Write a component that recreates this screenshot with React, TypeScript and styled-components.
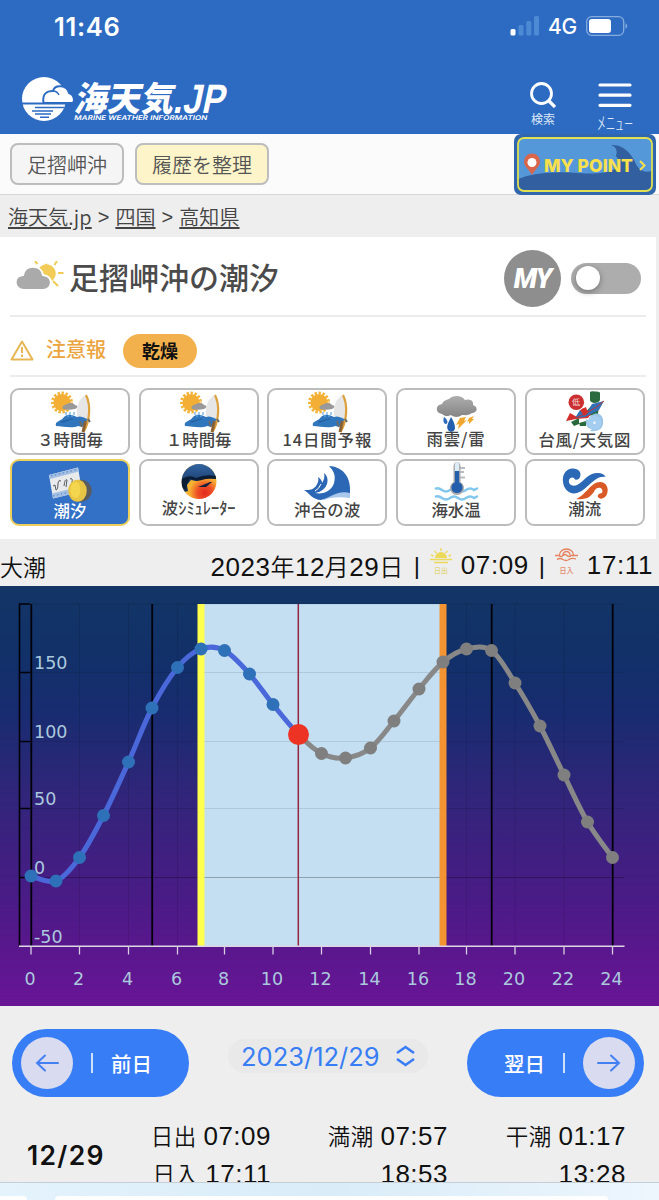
import React from 'react';
import styled, {createGlobalStyle} from 'styled-components';

const JP = `'Liberation Sans', 'Noto Sans CJK JP', sans-serif`;
const CJK = `'Noto Sans CJK JP', sans-serif`;

const GlobalStyle = createGlobalStyle`
  body {
    margin: 0;
    background: #eee;
    font-family: ${JP};
    color: #111;
  }
  svg {
    display: block;
    flex: none;
  }
`;

// 潮位グラフのデータ（[x, y] は描画座標）
const tidePoints: [number, number][] = [
  [31, 290], [56, 295], [79.5, 271.5], [103.5, 229.5], [128.5, 176], [152, 122],
  [177.5, 81.5], [201, 63], [224.5, 64.5], [249.5, 88], [273, 118.5], [298.5, 148.5],
  [321.5, 167.5], [345.5, 172], [370.5, 162], [394, 135], [419, 103], [443, 76],
  [466.5, 63], [491.5, 64.5], [515, 97], [540, 140], [564, 189], [587.5, 236], [612.5, 271.5],
];
const NOW = 11;

const smoothPath = (from: number, to: number) => {
  const p = tidePoints;
  let d = `M${p[from][0]} ${p[from][1]}`;
  for (let i = from; i < to; i++) {
    const a = p[Math.max(i - 1, 0)];
    const b = p[i];
    const c = p[i + 1];
    const e = p[Math.min(i + 2, p.length - 1)];
    d += ` C${b[0] + (c[0] - a[0]) / 6} ${b[1] + (c[1] - a[1]) / 6}`;
    d += ` ${c[0] - (e[0] - b[0]) / 6} ${c[1] - (e[1] - b[1]) / 6} ${c[0]} ${c[1]}`;
  }
  return d;
};

const ChartText = styled.text`
  fill: #abc9dd;
  font-family: 'DejaVu Sans', sans-serif;
  font-size: 17.5px;
`;

const TideChart: React.FC = () => (
  <svg width="659" height="420" viewBox="0 0 659 420">
    <defs>
      <linearGradient id="sea" x1="0" y1="0" x2="0" y2="1">
        <stop offset="0" stopColor="#133566" />
        <stop offset="0.15" stopColor="#113168" />
        <stop offset="0.3" stopColor="#182c70" />
        <stop offset="0.5" stopColor="#31257a" />
        <stop offset="0.75" stopColor="#4a1b86" />
        <stop offset="0.86" stopColor="#59178d" />
        <stop offset="1" stopColor="#681596" />
      </linearGradient>
    </defs>
    <rect width="659" height="420" fill="url(#sea)" />
    <rect x="201" y="18" width="242" height="342" fill="#c4dff2" />
    <g stroke="#000" strokeOpacity="0.1" strokeWidth="1">
      {[18, 86.5, 155.5, 222.5].map((y) => <path key={y} d={`M19 ${y}H624`} />)}
      {[79.5, 128.5, 177.5, 466.5, 515, 564].map((x) => <path key={x} d={`M${x} 18V360`} />)}
    </g>
    <path d="M19 291.5H624" stroke="#000" strokeOpacity="0.28" />
    <rect x="197.5" y="18" width="7" height="342" fill="#ffff50" />
    <rect x="439.5" y="18" width="7" height="342" fill="#f39332" />
    <path
      d="M30 18H19.5V360M19.5 86.5H30M19.5 155.5H30M19.5 222.5H30M19.5 291.5H30"
      fill="none" stroke="#020208" strokeWidth="1.6" />
    <path d="M31.3 18V360M152.2 18V360M491.7 18V360M612.7 18V360" stroke="#020208" strokeWidth="1.8" />
    <path d="M298.3 18V360" stroke="#962743" strokeWidth="1.5" />
    <path d="M19 360.3H624.5" stroke="#ddd6e4" strokeWidth="1.5" />
    {Array.from({length: 13}, (_, i) => {
      const x = tidePoints[i * 2][0];
      return (
        <g key={i}>
          <path d={`M${x} 360V368.5`} stroke="#d8cfe2" strokeWidth="1.3" />
          <ChartText x={x - 1} y="399" textAnchor="middle">{i * 2}</ChartText>
        </g>
      );
    })}
    {[[150, 83], [100, 152], [50, 219], [0, 288], [-50, 357]].map(([label, y]) => (
      <ChartText key={label} x="34" y={y}>{label}</ChartText>
    ))}
    <path d={smoothPath(0, NOW)} fill="none" stroke="#4a68da" strokeWidth="5" />
    <path d={smoothPath(NOW, 24)} fill="none" stroke="#888" strokeWidth="5" />
    {tidePoints.map(([x, y], i) => (
      <circle
        key={i} cx={x} cy={y} r={i === NOW ? 10.5 : 6.5}
        fill={i === NOW ? '#ed3323' : i < NOW ? '#2f71b8' : '#7f7f7f'} />
    ))}
  </svg>
);

const SurfIcon = () => (
  <g>
    <circle cx="52" cy="14.5" r="9.5" fill="none" stroke="#f2b43a" strokeWidth="3" strokeDasharray="2.4 1.6" />
    <circle cx="52" cy="14.5" r="8.6" fill="#f3ae35" />
    <path d="M76 7C69 10 66 18 67 28L77 34C81 24 79 14 76 7Z" fill="#e6e6e6" />
    <path d="M46 38C44 33 52 33 54 29C58 25 63 27 67 29C72 27 75 31 79 31L74 35C76 38 71 39 68 38C61 41 53 38 46 38Z" fill="#2f76bd" />
    <path d="M51 34C56 34 58 31 63 31" fill="none" stroke="#1f5d9f" strokeWidth="1.2" />
    <path d="M76 7C81 17 80 33 73.5 44" fill="none" stroke="#dca13c" strokeWidth="2.2" />
    <path d="M75.5 33L73 44" stroke="#8a6132" strokeWidth="3" />
    <path d="M70 33L72 39M78 31L80 34" stroke="#6c6a66" strokeWidth="2" />
    <path d="M53 21C51 17 56 17 57 16C60 14 64 15 65 17C68 17 68 20 65 21C61 22 56 22 53 21Z" fill="#999" />
    <path d="M56 24V27M60 24V27M64 24V27M58 27V29M62 27V29" stroke="#64a8df" strokeWidth="1.2" />
  </g>
);

const ThunderIcon = () => (
  <g>
    <defs>
      <linearGradient id="cloud" x1="0" y1="0" x2="0" y2="1">
        <stop offset="0" stopColor="#adadad" />
        <stop offset="1" stopColor="#858585" />
      </linearGradient>
    </defs>
    <path d="M46 26C39 25 39 17 46 16C48 11 53 12 54 10C58 7 66 7 69 12C75 10 78 14 77 17C83 19 81 25 76 25C72 28 69 27 66 27C62 30 57 29 55 27C52 29 48 28 46 26Z" fill="url(#cloud)" />
    <path d="M48 29C47 31 47 36 50 36C53 35 51 31 48 29Z" fill="#2d6dbb" />
    <path d="M55 29C52 35 50 39 52 42C54 45 59 44 59 40C59 36 57 32 55 29Z" fill="#225fae" />
    <path d="M64 30L70 29L68 33L71 32L62 41L63 36L60 37ZM73 30L78 28L76 31L78 31L73 36L73 33L71 34Z" fill="#f1a72f" />
  </g>
);

const TyphoonIcon = () => (
  <g>
    <path d="M65 4Q66 3 70 3.5Q75 3 75 5V12Q74 15 69 15Q65 14 65 12Z" fill="#2c6a3f" />
    <path d="M67 17L74 17L73 26L63 28L58 27ZM46 34L54 30L54 36L49 38ZM54 35L61 33L61 38L55 38Z" fill="#28683d" />
    <path d="M41 33L45 25L52 29L58 20L65 24L73 17L63 30L51 31Z" fill="#d62d2b" />
    <path d="M50 30L55 22L61 27L67 16L79 13L74 22L66 26L60 29Z" fill="#3270b8" />
    <path d="M55 22L61 19L63 25L59 28Z" fill="#d62d2b" />
    <path d="M42 32Q62 28 79 13" fill="none" stroke="#c43534" strokeWidth="1" />
    <circle cx="51.3" cy="14.3" r="7.8" fill="#cb2f30" />
    <text x="47" y="17" fontSize="8" fill="#f6dada" fontFamily="Noto Sans CJK JP">低</text>
    <path d="M69 26C76 24 79 30 78 36C77 41 73 44 65 43L67 41C62 41 60 36 61 31L64 33C64 29 66 27 69 26Z" fill="#9bc5e8" />
    <circle cx="69.5" cy="34.7" r="7" fill="#a5cdef" />
    <circle cx="69.5" cy="34.7" r="1.3" fill="#eef7ff" />
  </g>
);

const TideIcon = () => (
  <g>
    <path d="M39 16L68 8.5L72 32L43 39.5Z" fill="#e9eaec" />
    <path d="M39 16L68 8.5L69 12.5L40 20ZM42 34.5L60 30V35.5L43 39.5Z" fill="#a4bfe4" />
    <path d="M41 17L67 10.5M43 37L60 33" stroke="#4d7ec1" strokeDasharray="1.5 2.5" />
    <path d="M43 27L45 26L46 31Q48 31 48 24Q49 20 51 22M54 27Q55 19 57 21L56 28M60 20Q63 18 62 24L60 27L65 23" fill="none" stroke="#555b62" />
    <circle cx="70.7" cy="31.7" r="11" fill="#595b5e" />
    <ellipse cx="67.5" cy="31.7" rx="9.3" ry="11" fill="#e8c544" />
    <ellipse cx="65.5" cy="31" rx="5" ry="8" fill="#f4d64e" />
  </g>
);

const SimulatorIcon = () => (
  <g>
    <defs>
      <clipPath id="ball"><circle cx="60" cy="22.6" r="17.5" /></clipPath>
      <radialGradient id="heat" cx="0.66" cy="0.8" r="0.6">
        <stop offset="0" stopColor="#e3281d" />
        <stop offset="0.35" stopColor="#ee4f26" />
        <stop offset="0.7" stopColor="#f7ae31" />
        <stop offset="1" stopColor="#f8c034" />
      </radialGradient>
      <linearGradient id="deep" x1="0" y1="0" x2="0" y2="1">
        <stop offset="0" stopColor="#3265a3" />
        <stop offset="1" stopColor="#10294f" />
      </linearGradient>
    </defs>
    <g clipPath="url(#ball)">
      <rect x="42" y="5" width="36" height="36" fill="url(#heat)" />
      <path d="M42 5H78V18Q70 17 66 19L58 22L52 21L48 26L49 32L42 34Z" fill="url(#deep)" />
      <path d="M43 20Q50 15 57 19Q66 15 77 17V20Q68 19 63 21Q57 23 51 20L48 25L47 31L43 28Z" fill="#0b1c35" />
      <path d="M59 28L64 26L71 23L73 23L67 28Z" fill="#10223d" />
    </g>
  </g>
);

const WaveIcon = () => (
  <g>
    <path d="M52 38Q65 33 83 32L83 39Q66 37 57 41Z" fill="#a9c7ec" />
    <path
      d="M62 7C78 8 84 20 83 34C70 31 63 39 54 41C46 41 42 34 37 31C43 31 46 31 49 27C51 24 52 21 51 18C54 20 55 22 55 24C57 21 58 18 57 14C61 17 61 22 60 25C58 30 54 33 48 34C57 36 65 31 67 24C69 17 67 12 62 7Z"
      fill="#2b67b4" />
    <path d="M48 32Q52 30 54 25" fill="none" stroke="#fff" />
  </g>
);

const TemperatureIcon = () => (
  <g>
    <path d="M39 30Q42 28 46 31T54 31T62 31T70 31T78 31L82 29M39 38Q42 36 46 39T54 39T62 39T70 39T78 39L82 37" fill="none" stroke="#81c7ee" strokeWidth="2.4" />
    <path d="M64 9H69M64 13H68M64 18.5H69" stroke="#b9bbc0" strokeWidth="2.2" />
    <path d="M57.5 23V7Q58 3 61 3T64.5 7V23A7 7 0 1 1 57.5 23Z" fill="#aaa" />
    <circle cx="61" cy="28.5" r="5.6" fill="#245fad" />
    <path d="M61 5V13" stroke="#dcecf8" strokeWidth="4.2" strokeLinecap="round" />
    <path d="M61 12V27" stroke="#245fad" strokeWidth="4.2" />
  </g>
);

const CurrentIcon = () => (
  <g>
    <path
      d="M55 18C57 13 53 9 47 9.5C40 10 37 17 38 23C39 31 45 36 52 34C63 31 69 16 80.5 18C79 14 72 13 67 15C60 18 57 24 52 26C47 28 43 25 44 21C45 18 48 18 49 19C50 22 54 21 55 18Z"
      fill="#2b68b5" />
    <path
      d="M51 40C61 36 66 23 75 23C82 23 84 30 82 35C81 38 77 41 74 39C71 37 74 34 77 34C79 29 73 27 70 31C66 38 62 41 51 40Z"
      fill="#d95a27" />
  </g>
);

const menuItems = [
  {label: '３時間毎', icon: <SurfIcon />},
  {label: '１時間毎', icon: <SurfIcon />},
  {label: '14日間予報', icon: <SurfIcon />, spacing: 0.9},
  {label: '雨雲/雷', icon: <ThunderIcon />, spacing: 0.9, lift: 1},
  {label: '台風/天気図', icon: <TyphoonIcon />, spacing: 0.7},
  {label: '潮汐', icon: <TideIcon />, active: true},
  {label: '波ｼﾐｭﾚｰﾀｰ', icon: <SimulatorIcon />, lift: 3},
  {label: '沖合の波', icon: <WaveIcon />, spacing: 0.3, lift: 1},
  {label: '海水温', icon: <TemperatureIcon />, lift: 1},
  {label: '潮流', icon: <CurrentIcon />, lift: 2},
];

const Logo = () => (
  <svg width="212" height="48" viewBox="0 0 212 48" overflow="visible">
    <defs>
      <clipPath id="sun"><circle cx="22" cy="22" r="22" /></clipPath>
    </defs>
    <g clipPath="url(#sun)">
      <rect width="44" height="44" fill="#fff" />
      <path d="M13 30.5H44M10 34H31M13 37H29M18 40.2H27" stroke="#2d6bc2" strokeWidth="1.5" />
    </g>
    <path d="M21.5 26C20 17 25 13.5 31 14C33 7 45 8 47 16C53 18 53 26 50 26Z" fill="#fff" stroke="#2d6bc2" strokeWidth="2" />
    <path d="M31 14C34 14 36 16 37 18" fill="none" stroke="#2d6bc2" strokeWidth="1.5" />
    <path d="M0 26.5H52" stroke="#2d6bc2" strokeWidth="1.8" />
    <g fill="#fff" transform="skewX(-12)">
      <text x="59" y="34" fontSize="34" fontWeight="900" fontFamily="Noto Sans CJK JP" textLength="99" lengthAdjust="spacingAndGlyphs">海天気</text>
      <text x="158" y="36" fontSize="41" fontWeight="700" fontFamily="Liberation Sans" textLength="51" lengthAdjust="spacingAndGlyphs">.JP</text>
      <text x="61" y="43" fontSize="6.5" fontWeight="600" fontFamily="Inter" textLength="133" lengthAdjust="spacingAndGlyphs">MARINE WEATHER INFORMATION</text>
    </g>
  </svg>
);

const MyPointBanner = () => (
  <svg width="142" height="61" viewBox="0 0 142 61">
    <rect width="142" height="61" rx="7" fill="#2f66ad" />
    <rect x="4" y="4" width="134" height="53" rx="6" fill="#5598da" />
    <path d="M4 45Q25 36 65 39Q90 41 101 35Q109 22 96 20L102 22Q105 14 97 11C111 10 119 22 123 32Q129 40 138 37V51Q138 57 132 57H10Q4 57 4 51Z" fill="#325fa0" />
    <rect x="4" y="4" width="134" height="53" rx="6" fill="none" stroke="#dfe052" strokeWidth="1.8" />
    <path d="M18 41C15 35 10 33 10 27.5A8 8 0 0 1 26 27.5C26 33 21 35 18 41Z" fill="#d9654b" />
    <circle cx="18" cy="28.5" r="4.5" fill="#fff" />
    <text x="30" y="37.5" fontSize="17.5" fontWeight="800" fontFamily="Inter" fill="#f7e04b" textLength="89" lengthAdjust="spacingAndGlyphs">MY POINT</text>
    <path d="M126 27L130.5 31.5L126 36" fill="none" stroke="#f7e04b" strokeWidth="2" />
  </svg>
);

const App: React.FC = () => (
  <Page>
    <GlobalStyle />
    <StatusBar>
      <Clock>11:46</Clock>
      <StatusIcons>
        <svg width="30" height="20" viewBox="0 0 30 20">
          <rect x="0.5" y="13" width="5" height="6.5" rx="1.5" fill="#fff" />
          <g fill="#4c8ad4">
            <rect x="8.5" y="9" width="5" height="10.5" rx="1.5" />
            <rect x="16.3" y="5" width="5" height="14.5" rx="1.5" />
            <rect x="24" y="0" width="5" height="19.5" rx="1.5" />
          </g>
        </svg>
        <Carrier>4G</Carrier>
        <svg width="43" height="20" viewBox="0 0 43 20">
          <rect x="0.7" y="0.7" width="37" height="18.6" rx="5" fill="none" stroke="#86abde" strokeWidth="1.3" />
          <rect x="3" y="3" width="22" height="14" rx="3" fill="#fff" />
          <path d="M39.5 7Q43 10 39.5 13Z" fill="#86abde" />
        </svg>
      </StatusIcons>
    </StatusBar>
    <Header>
      <Logo />
      <HeaderActions>
        <HeaderButton>
          <svg width="26" height="26" viewBox="0 0 26 26" fill="none" stroke="#fff" strokeWidth="2.8">
            <circle cx="11.5" cy="11.5" r="10" />
            <path d="M19 19L25 25" strokeWidth="3.3" />
          </svg>
          <HeaderLabel $size={12}>検索</HeaderLabel>
        </HeaderButton>
        <HeaderButton>
          <svg width="34" height="26" viewBox="0 0 34 26" stroke="#fff" strokeWidth="3.2" strokeLinecap="round">
            <path d="M2 3H32M2 13.2H32M2 23.3H32" />
          </svg>
          <HeaderLabel $size={18}>ﾒﾆｭｰ</HeaderLabel>
        </HeaderButton>
      </HeaderActions>
    </Header>
    <HistoryBar>
      <HistoryButton>足摺岬沖</HistoryButton>
      <HistoryButton $highlight>履歴を整理</HistoryButton>
      <MyPoint><MyPointBanner /></MyPoint>
    </HistoryBar>
    <Breadcrumb>
      <Crumb>海天気.jp</Crumb>&gt;<Crumb>四国</Crumb>&gt;<Crumb>高知県</Crumb>
    </Breadcrumb>
    <Panel>
      <TitleRow>
        <WeatherMark width="50" height="32" viewBox="0 0 50 32">
          <path d="M30.5 3L33 6M42 0L39.5 4M20 0L22.5 3M43 12H48.5M38 20L43 25" stroke="#f2cc57" strokeWidth="2" />
          <circle cx="31.5" cy="12.5" r="9.3" fill="#f2cc57" />
          <path d="M9 29C-2 28-2 15 8 14C10 3 26 3 28 14C39 15 38 29 28 29Z" fill="#aaa" stroke="#fff" strokeWidth="2" />
        </WeatherMark>
        <Title>足摺岬沖の潮汐</Title>
        <MyBadge>MY</MyBadge>
        <Toggle><Knob /></Toggle>
      </TitleRow>
      <AlertRow>
        <svg width="24" height="21" viewBox="0 0 24 21" fill="none" stroke="#e8b653" strokeWidth="2" strokeLinejoin="round">
          <path d="M12 1.5L22.5 19.5H1.5Z" />
          <path d="M12 7V13M12 14.5V17" />
        </svg>
        <AlertLabel>注意報</AlertLabel>
        <AlertTag>乾燥</AlertTag>
      </AlertRow>
      <MenuGrid>
        {menuItems.map(({label, icon, active, spacing, lift}) => (
          <MenuTile key={label} $active={active}>
            <svg width="116" height="41" viewBox="2 2 116 41" overflow="visible">{icon}</svg>
            <TileLabel $spacing={spacing} $lift={lift}>{label}</TileLabel>
          </MenuTile>
        ))}
      </MenuGrid>
    </Panel>
    <TideSummary>
      <TideName>大潮</TideName>
      <DateText>
        <Digits>2023</Digits>年<Digits>12</Digits>月<Digits>29</Digits>日
      </DateText>
      <Divider $width={26}>|</Divider>
      <svg width="22" height="27" viewBox="0 0 22 27">
        <path d="M5 10A6 6 0 0 1 17 10Z" fill="#ecd95a" />
        <path d="M0 11.5H22M4 14.5H18M11 0V3M4.5 3L6.5 5M17.5 3L15.5 5M1 7L3.5 8M21 7L18.5 8" stroke="#ecd95a" strokeWidth="1.4" />
        <text x="4" y="25" fontSize="7" fontWeight="500" fill="#e3d680" fontFamily="Noto Sans CJK JP">日出</text>
      </svg>
      <TimeText>07:09</TimeText>
      <Divider $width={26}>|</Divider>
      <svg width="23" height="27" viewBox="0 0 23 27" fill="none">
        <path d="M4.5 7A7 6 0 0 1 18.5 7M8 7A3.5 3.5 0 0 1 15 7M0 7.5H4Q6 9.5 8 7.5T12 7.5T16 7.5L19 7.5H23M2 11.5Q5 9.5 8 11.5T14 11.5T21 11" stroke="#e5825f" strokeWidth="1.3" />
        <text x="4.5" y="25" fontSize="7" fontWeight="500" fill="#e58a6c" fontFamily="Noto Sans CJK JP">日入</text>
      </svg>
      <TimeText>17:11</TimeText>
    </TideSummary>
    <TideChart />
    <DayNav>
      <DayButton>
        <ArrowCircle>
          <svg width="24" height="18" viewBox="0 0 24 18" fill="none" stroke="#4381f2" strokeWidth="2" strokeLinecap="round">
            <path d="M23 9H2M10 1.5L2 9L10 16.5" />
          </svg>
        </ArrowCircle>
        <PillLine />
        <span>前日</span>
      </DayButton>
      <DateSelect>
        2023/12/29
        <svg width="19" height="22" viewBox="0 0 19 22" fill="none" stroke="#387df3" strokeWidth="2.6">
          <path d="M1 8L9.5 2L18 8M1 14L9.5 20L18 14" />
        </svg>
      </DateSelect>
      <DayButton $next>
        <ArrowCircle>
          <svg width="24" height="18" viewBox="0 0 24 18" fill="none" stroke="#4381f2" strokeWidth="2" strokeLinecap="round">
            <path d="M1 9H22M14 1.5L22 9L14 16.5" />
          </svg>
        </ArrowCircle>
        <PillLine />
        <span>翌日</span>
      </DayButton>
    </DayNav>
    <DayTable>
      <DayLabel>12/29</DayLabel>
      <DayColumn $width={166}>
        <span>日出 <Digits>07:09</Digits></span>
        <span>日入 <Digits>17:11</Digits></span>
      </DayColumn>
      <DayColumn $width={177}>
        <span>満潮 <Digits>07:57</Digits></span>
        <Digits>18:53</Digits>
      </DayColumn>
      <DayColumn $width={178}>
        <span>干潮 <Digits>01:17</Digits></span>
        <Digits>13:28</Digits>
      </DayColumn>
    </DayTable>
    <BottomAd>
      <AdTab />
      <AdSheet />
    </BottomAd>
  </Page>
);

export default App;

const Page = styled.div`
  display: flex;
  flex-direction: column;
  width: 659px;
  height: 1200px;
  overflow: hidden;
  background: #eee;
`;

const StatusBar = styled.div`
  display: flex;
  align-items: center;
  justify-content: space-between;
  box-sizing: border-box;
  height: 52px;
  padding: 0 30px 0 54px;
  background: #2d6bc2;
  color: #fff;
  font-family: Inter, sans-serif;
`;

const Clock = styled.span`
  font-size: 25.5px;
  font-weight: 600;
  letter-spacing: 0.7px;
`;

const StatusIcons = styled.div`
  display: flex;
  align-items: center;
`;

const Carrier = styled.span`
  width: 29px;
  margin: 1px 9px 0 8px;
  font-size: 21px;
  font-weight: 500;
  letter-spacing: -0.3px;
`;

const Header = styled.header`
  display: flex;
  justify-content: space-between;
  box-sizing: border-box;
  height: 82px;
  padding: 25px 26px 0 22px;
  background: #2d6bc2;
  color: #fff;
`;

const HeaderActions = styled.div`
  display: flex;
  gap: 41px;
  margin-top: 5px;
`;

const HeaderButton = styled.div`
  display: flex;
  flex-direction: column;
  align-items: center;
`;

const HeaderLabel = styled.span<{$size: number}>`
  height: 22px;
  margin-top: ${(p) => (p.$size > 12 ? 3 : 0)}px;
  font-family: ${CJK};
  font-size: ${(p) => p.$size}px;
  font-weight: ${(p) => (p.$size > 12 ? 300 : 400)};
  line-height: 22px;
  color: #dbe7f6;
`;

const HistoryBar = styled.div`
  display: flex;
  align-items: flex-start;
  gap: 11px;
  box-sizing: border-box;
  height: 61px;
  padding-left: 10px;
  background: #fbfbfb;
  border-bottom: 1px solid #d8d8d8;
`;

const HistoryButton = styled.div<{$highlight?: boolean}>`
  box-sizing: border-box;
  width: ${(p) => (p.$highlight ? 134 : 114)}px;
  height: 42px;
  margin-top: 9px;
  border: 2px solid #bdbdbd;
  border-radius: 8px;
  background: ${(p) => (p.$highlight ? '#fdf5c9' : '#f5f5f5')};
  color: #555;
  font-family: ${CJK};
  font-size: 20px;
  font-weight: 350;
  line-height: 40px;
  text-align: center;
`;

const MyPoint = styled.div`
  margin: 0 3px 0 auto;
`;

const Breadcrumb = styled.nav`
  display: flex;
  gap: 6px;
  height: 42px;
  padding-left: 8px;
  background: #eee;
  color: #444;
  font-size: 20px;
  line-height: 44px;
`;

const Crumb = styled.span`
  font-family: ${CJK};
  font-weight: 350;
  letter-spacing: 0.1px;
  text-decoration: underline;
  text-underline-offset: 2px;
`;

const Panel = styled.main`
  box-sizing: border-box;
  width: 656px;
  height: 302px;
  padding: 0 10px;
  background: #fff;
`;

const TitleRow = styled.div`
  display: flex;
  align-items: center;
  box-sizing: border-box;
  height: 80px;
  padding: 4px 5px 0;
  border-bottom: 2px solid #ececec;
`;

const WeatherMark = styled.svg`
  margin-top: -3px;
`;

const Title = styled.h1`
  flex: 1;
  margin: -5px 0 0 4px;
  color: #4b4b4b;
  font-family: ${CJK};
  font-size: 30px;
  font-weight: 500;
  line-height: 44px;
`;

const MyBadge = styled.div`
  width: 57px;
  height: 57px;
  border-radius: 50%;
  background: #8e8e8e;
  color: #fff;
  font-family: Roboto, sans-serif;
  font-size: 27.5px;
  font-style: italic;
  font-weight: 900;
  letter-spacing: -1.2px;
  line-height: 58px;
  text-align: center;
`;

const Toggle = styled.div`
  box-sizing: border-box;
  width: 70px;
  height: 31px;
  margin-left: 10px;
  padding: 3px 5px;
  border-radius: 16px;
  background: #adadad;
`;

const Knob = styled.div`
  width: 24px;
  height: 24px;
  border-radius: 50%;
  background: #fff;
  box-shadow: 0 2px 6px rgba(0, 0, 0, 0.35);
`;

const AlertRow = styled.div`
  display: flex;
  align-items: center;
  box-sizing: border-box;
  height: 60px;
  padding-top: 9px;
  border-bottom: 2px solid #ececec;
`;

const AlertLabel = styled.span`
  margin: -4px 17px 0 12px;
  color: #eba43d;
  font-family: ${CJK};
  font-size: 20px;
  font-weight: 500;
`;

const AlertTag = styled.span`
  width: 74px;
  height: 34px;
  border-radius: 17px;
  background: #f3b14e;
  color: #111;
  font-family: ${CJK};
  font-size: 18px;
  font-weight: 700;
  line-height: 33px;
  text-align: center;
`;

const MenuGrid = styled.div`
  display: grid;
  grid-template-columns: repeat(5, 120px);
  gap: 4px 8.7px;
  margin-top: 11px;
`;

const MenuTile = styled.div<{$active?: boolean}>`
  display: flex;
  flex-direction: column;
  align-items: center;
  box-sizing: border-box;
  height: 67px;
  border: 2px solid ${(p) => (p.$active ? '#edcf5b' : '#bcbcbc')};
  border-radius: 9px;
  background: ${(p) => (p.$active ? '#3271c6' : '#fff')};
  color: ${(p) => (p.$active ? '#fff' : '#444')};
`;

const TileLabel = styled.span<{$spacing?: number; $lift?: number}>`
  z-index: 1;
  margin-top: ${(p) => -3 - (p.$lift || 0)}px;
  font-family: ${CJK};
  font-size: 16.4px;
  font-weight: 500;
  letter-spacing: ${(p) => p.$spacing || 0}px;
  line-height: 22px;
  white-space: nowrap;
`;

const TideSummary = styled.div`
  display: flex;
  align-items: center;
  box-sizing: border-box;
  height: 47px;
  padding-top: 6px;
  padding-right: 6px;
  font-size: 24px;
  font-weight: 350;

  svg {
    margin-top: -9px;
  }
`;

const TideName = styled.span`
  flex: 1;
  font-size: 23px;
`;

const DateText = styled.span`
  letter-spacing: 0.5px;
`;

const Digits = styled.span`
  font-size: 26px;
  font-weight: 400;
`;

const TimeText = styled(Digits)`
  margin-left: 9px;
  letter-spacing: 0.6px;
`;

const Divider = styled.span<{$width: number}>`
  width: ${(p) => p.$width}px;
  text-align: center;
`;

const DayNav = styled.div`
  display: flex;
  align-items: flex-start;
  justify-content: space-between;
  padding: 23px 15px 0 12px;
`;

const DayButton = styled.div<{$next?: boolean}>`
  display: flex;
  flex-direction: ${(p) => (p.$next ? 'row-reverse' : 'row')};
  align-items: center;
  box-sizing: border-box;
  width: 177px;
  height: 68px;
  padding: 0 9px;
  border-radius: 34px;
  background: #377df6;
  color: #fff;
  font-family: ${CJK};
  font-size: 20.5px;
  font-weight: 500;
`;

const ArrowCircle = styled.div`
  display: flex;
  align-items: center;
  justify-content: center;
  width: 52px;
  height: 52px;
  border-radius: 50%;
  background: #d9dbf0;
`;

const PillLine = styled.div`
  width: 2px;
  height: 20px;
  margin: 0 18px;
  background: #cfe0fb;
`;

const DateSelect = styled.div`
  display: flex;
  align-items: center;
  justify-content: space-between;
  box-sizing: border-box;
  width: 200px;
  height: 34px;
  margin-top: 10px;
  padding: 0 13px;
  border-radius: 17px;
  background: #e9e9ea;
  color: #387df3;
  font-family: Inter, sans-serif;
  font-size: 25.5px;
`;

const DayTable = styled.div`
  display: flex;
  height: 85px;
  overflow: hidden;
  font-size: 22.5px;
  font-weight: 350;
`;

const DayLabel = styled.div`
  width: 105px;
  padding: 40px 0 0 27px;
  box-sizing: border-box;
  font-family: Inter, sans-serif;
  font-size: 26.5px;
  font-weight: 600;
  letter-spacing: 1.3px;
  line-height: 36px;
`;

const DayColumn = styled.div<{$width: number}>`
  display: flex;
  flex-direction: column;
  align-items: flex-end;
  width: ${(p) => p.$width}px;
  padding-top: 21px;
  letter-spacing: 0.5px;
  line-height: 37px;
  white-space: nowrap;
`;

const BottomAd = styled.div`
  display: flex;
  gap: 28px;
  flex: 1;
  box-sizing: border-box;
  padding-top: 13px;
  border-top: 1px solid #c5ced5;
  background: linear-gradient(90deg, #e4f3fc, #d9ecf8 50%, #edf6fd);
`;

const AdTab = styled.div`
  width: 27px;
  border-top-right-radius: 12px;
  background: #fff;
`;

const AdSheet = styled.div`
  width: 553px;
  border-radius: 12px 12px 0 0;
  background: #fff;
`;
